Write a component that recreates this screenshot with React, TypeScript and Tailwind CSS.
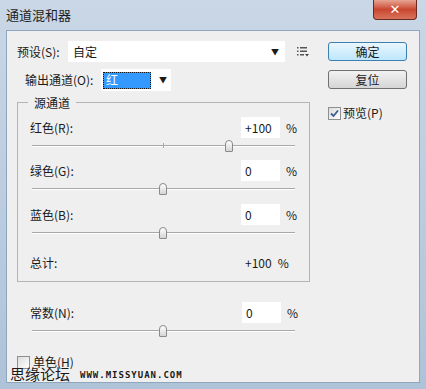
import React from 'react';

const font = { fontFamily: '"Noto Sans CJK SC", "Liberation Sans", sans-serif' };

function Slider({ pos, tick }: { pos: number; tick?: boolean }) {
  // pos: thumb centre in px from the track's left edge
  return (
    <div className="relative ml-[2px] h-[14px] w-[263px]">
      <div className="absolute left-0 right-0 top-[7px] h-[1px] bg-[#a8a8a8]" />
      <div className="absolute left-0 right-0 top-[8px] h-[1px] bg-white" />
      {tick && <div className="absolute left-[131px] top-[5px] h-[5px] w-[1px] bg-[#a8a8a8]" />}
      <div
        className="absolute top-[2px] h-[12px] w-[8px] rounded-t-[4px] rounded-b-[1px] border border-[#8a8a8a] bg-gradient-to-b from-white to-[#d4d4d4]"
        style={{ left: pos - 4 }}
      />
    </div>
  );
}

function ValueRow({ label, value }: { label: string; value: string }) {
  return (
    <div className="flex h-[21px] items-center">
      <span className="w-[212px]">{label}</span>
      <div className="flex h-[21px] w-[39px] items-center bg-white pl-[4px]">{value}</div>
      <span className="ml-[6px]">%</span>
    </div>
  );
}

export default function App() {
  return (
    <div
      className="relative flex h-[389px] w-[426px] flex-col overflow-hidden bg-gradient-to-b from-[#c9d7e6] via-[#bccde0] to-[#aec3d8] text-[12px] text-[#1a1a1a]"
      style={font}
    >
      {/* title bar */}
      <div className="flex h-[30px] items-start">
        <span className="ml-[6px] mt-[5px] text-[13px] text-[#1e1e1e]">通道混和器</span>
        <div className="ml-auto mr-[9px] flex h-[20px] w-[44px] items-center justify-center rounded-b-[4px] border border-t-0 border-[#6b2a22] bg-gradient-to-b from-[#e5a493] via-[#c9462f] to-[#d8735b]">
          <span className="text-[13px] font-bold leading-none text-white" style={{ fontFamily: '"DejaVu Sans", sans-serif' }}>
            ✕
          </span>
        </div>
      </div>

      {/* client area */}
      <div className="mx-[6px] mb-[6px] flex flex-1 border border-[#8fa6bf] bg-[#efefef]">
        {/* left column */}
        <div className="flex w-[304px] flex-col pl-[10px] pt-[10px]">
          <div className="flex h-[21px] items-center">
            <span className="w-[51px]">预设(S):</span>
            <div className="flex h-[21px] w-[217px] items-center justify-between bg-white pl-[5px] pr-[6px]">
              <span>自定</span>
              <span className="text-[8px]">▼</span>
            </div>
            <svg width="12" height="11" viewBox="0 0 12 11" className="ml-[12px]">
              <rect x="0" y="1" width="1.5" height="1.5" fill="#555" />
              <rect x="3" y="1" width="7" height="1.5" fill="#555" />
              <rect x="0" y="4.5" width="1.5" height="1.5" fill="#555" />
              <rect x="3" y="4.5" width="7" height="1.5" fill="#555" />
              <rect x="0" y="8" width="1.5" height="1.5" fill="#555" />
              <rect x="3" y="8" width="4" height="1.5" fill="#555" />
              <path d="M8 8 L12 8 L10 10.5 Z" fill="#444" />
            </svg>
          </div>

          <div className="ml-[8px] mt-[7px] flex h-[22px] items-center">
            <span className="w-[76px]">输出通道(O):</span>
            <div className="flex h-[22px] w-[70px] items-center bg-white pl-[2px]">
              <div className="flex h-[17px] w-[48px] items-center border border-dotted border-[#1a1a1a] bg-[#3399ff] pl-[2px] text-white">
                红
              </div>
              <span className="ml-[8px] text-[8px]">▼</span>
            </div>
          </div>

          {/* source channels group */}
          <div className="relative mt-[11px] h-[180px] w-[293px] border border-[#b4b4b4] px-[12px] pt-[14px]">
            <span className="absolute left-[10px] top-[-9px] bg-[#efefef] px-[6px]">源通道</span>
            <ValueRow label="红色(R):" value="+100" />
            <Slider pos={197} tick />
            <div className="mt-[8px]">
              <ValueRow label="绿色(G):" value="0" />
            </div>
            <Slider pos={131} />
            <div className="mt-[9px]">
              <ValueRow label="蓝色(B):" value="0" />
            </div>
            <Slider pos={131} />
            <div className="mt-[16px] flex h-[16px] items-center">
              <span className="w-[215px]">总计:</span>
              <span>+100</span>
              <span className="ml-[6px]">%</span>
            </div>
          </div>

          <div className="ml-[13px] mt-[20px]">
            <ValueRow label="常数(N):" value="0" />
            <Slider pos={131} />
          </div>

          <div className="mt-[16px] flex items-center">
            <div className="h-[13px] w-[13px] border border-[#8f8f8f] bg-gradient-to-br from-[#dcdcdc] to-white" />
            <span className="ml-[3px]">单色(H)</span>
          </div>
        </div>

        {/* right column */}
        <div className="flex flex-col pl-[17px] pt-[11px]">
          <button className="flex h-[19px] w-[79px] items-center justify-center rounded-[3px] border border-[#3c7fb1] bg-gradient-to-b from-[#eaf6fd] to-[#bee6fd] text-[12px]">
            确定
          </button>
          <button className="mt-[9px] flex h-[19px] w-[79px] items-center justify-center rounded-[3px] border border-[#707070] bg-gradient-to-b from-[#f2f2f2] to-[#d5d5d5] text-[12px]">
            复位
          </button>
          <div className="mt-[15px] flex items-center">
            <div className="flex h-[13px] w-[13px] items-center justify-center border border-[#8f8f8f] bg-gradient-to-br from-[#dcdcdc] to-white">
              <svg width="9" height="9" viewBox="0 0 9 9">
                <path d="M1 4.5 L3.5 7 L8 1.5" stroke="#3b5d8f" strokeWidth="1.8" fill="none" />
              </svg>
            </div>
            <span className="ml-[2px]">预览(P)</span>
          </div>
        </div>
      </div>

      {/* watermark */}
      <div className="absolute bottom-[8px] left-[10px] flex items-end">
        <span className="text-[15px] leading-none text-[#1a1a1a]">思缘论坛</span>
        <span className="mb-[1px] ml-[10px] text-[9px] font-bold leading-none tracking-[1px]" style={{ fontFamily: '"DejaVu Sans Mono", monospace' }}>
          WWW.MISSYUAN.COM
        </span>
      </div>
    </div>
  );
}
